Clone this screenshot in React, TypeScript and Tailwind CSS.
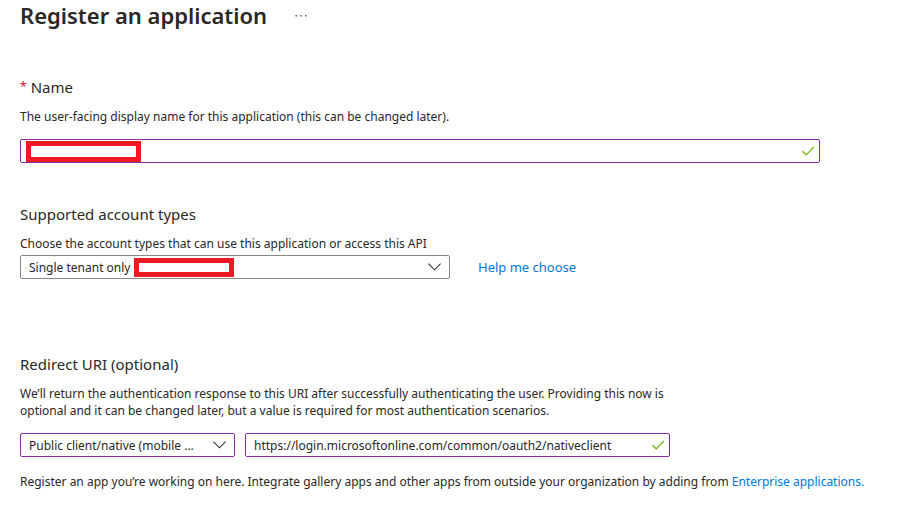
import { useState } from 'react';

function CheckIcon() {
  return (
    <svg className="pointer-events-none absolute top-[6px] right-[5px] h-3 w-[13px]" viewBox="0 0 13 12" fill="none">
      <path d="M0.5 6.3L4.2 9.8L11.8 2" stroke="#6bb700" strokeWidth="1.2" />
    </svg>
  );
}

function ChevronIcon() {
  return (
    <svg className="pointer-events-none absolute top-2 right-[9px] h-2 w-[13px]" viewBox="0 0 13 8" fill="none">
      <path d="M0.4 0.7L6.5 6.8L12.6 0.7" stroke="#323130" strokeWidth="1.1" />
    </svg>
  );
}

export default function App() {
  const [name, setName] = useState('');
  const [redirectUri, setRedirectUri] = useState('https://login.microsoftonline.com/common/oauth2/nativeclient');

  return (
    <main className="bg-white pl-5 pb-9 font-['Noto_Sans','Open_Sans',sans-serif] text-[12px] leading-[17px] text-[#292827]">
      {/* Title */}
      <header className="flex items-center gap-7">
        <h1 className="text-[22px] leading-[30px] font-semibold">Register an application</h1>
        <button type="button" aria-label="More options" className="text-[#605e5c]">
          <svg className="h-1 w-3" viewBox="0 0 12 4" fill="currentColor">
            <rect x="0.5" y="2" width="1.5" height="1.5" />
            <rect x="5.2" y="2" width="1.5" height="1.5" />
            <rect x="10" y="2" width="1.5" height="1.5" />
          </svg>
        </button>
      </header>

      <form onSubmit={(e) => e.preventDefault()}>
        {/* Name */}
        <section className="mt-12">
          <label htmlFor="name" className="flex gap-1 text-[15px] leading-[18px]">
            <span className="text-[12px] text-[#e00b1c]">*</span>
            <span>Name</span>
          </label>
          <p className="mt-3">The user-facing display name for this application (this can be changed later).</p>
          <div className="relative mt-[14px] max-w-[800px]">
            <input
              id="name"
              type="text"
              value={name}
              onChange={(e) => setName(e.target.value)}
              className="block h-6 w-full rounded-[2px] border border-[#8a2da5] bg-white px-2 outline-none"
            />
            <span className="pointer-events-none absolute top-[2px] left-[6px] h-[21px] w-[115px] border-5 border-[#ed1c24] bg-white" />
            <CheckIcon />
          </div>
        </section>

        {/* Account types */}
        <section className="mt-[42px]">
          <h2 className="text-[15px] leading-[18px]">Supported account types</h2>
          <label htmlFor="account" className="mt-3 block">
            Choose the account types that can use this application or access this API
          </label>
          <div className="mt-[3px] flex items-center gap-7">
            <div className="relative w-full max-w-[430px]">
              <select
                id="account"
                className="block h-6 w-full appearance-none rounded-[2px] border border-[#8a8886] bg-white pr-7 pl-2 outline-none"
              >
                <option>Single tenant only</option>
              </select>
              <span className="pointer-events-none absolute top-[3px] left-[114px] h-[19px] w-[100px] border-5 border-[#ed1c24] bg-white" />
              <ChevronIcon />
            </div>
            <a href="#help" className="text-[13px] whitespace-nowrap text-[#0078d4]">
              Help me choose
            </a>
          </div>
        </section>

        {/* Redirect URI */}
        <section className="mt-[76px]">
          <h2 className="text-[15px] leading-[18px]">Redirect URI (optional)</h2>
          <p className="mt-3 max-w-[670px]">
            We’ll return the authentication response to this URI after successfully authenticating the user. Providing this now is
            optional and it can be changed later, but a value is required for most authentication scenarios.
          </p>
          <div className="mt-[14px] flex max-w-[650px] gap-[10px]">
            <div className="relative w-[215px] shrink-0">
              <select
                aria-label="Platform"
                className="block h-6 w-full appearance-none rounded-[2px] border border-[#8a2da5] bg-white pr-7 pl-2 outline-none"
              >
                <option>Public client/native (mobile ...</option>
              </select>
              <ChevronIcon />
            </div>
            <div className="relative flex-1">
              <input
                type="text"
                aria-label="Redirect URI"
                value={redirectUri}
                onChange={(e) => setRedirectUri(e.target.value)}
                className="block h-6 w-full rounded-[2px] border border-[#8a2da5] bg-white pr-7 pl-2 outline-none"
              />
              <CheckIcon />
            </div>
          </div>
        </section>
      </form>

      <p className="mt-4">
        Register an app you’re working on here. Integrate gallery apps and other apps from outside your organization by adding from{' '}
        <a href="#enterprise" className="text-[#0078d4]">
          Enterprise applications.
        </a>
      </p>
    </main>
  );
}
